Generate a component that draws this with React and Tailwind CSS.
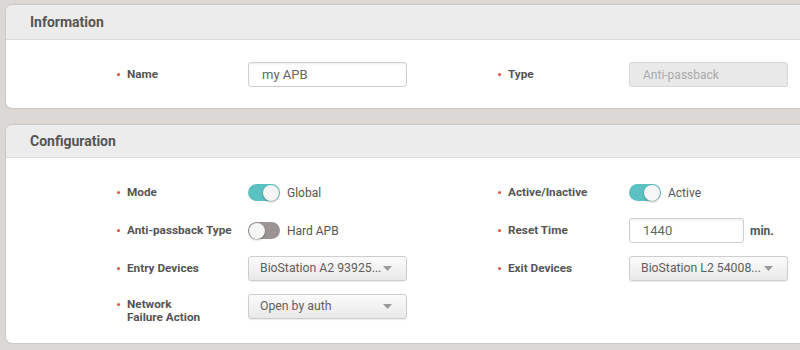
import React from "react";

function Label({ children, lines }) {
  return (
    <div className={`flex w-[131px] shrink-0 ${lines ? "items-start pt-[4px]" : "items-center"}`}>
      <span className={`w-[3px] h-[3px] rounded-full bg-[#e8513f] mr-[7px] shrink-0 ${lines ? "mt-[5px]" : ""}`} />
      <span className="text-[11.75px] leading-[12.5px] font-bold text-[#555]">{children}</span>
    </div>
  );
}

function Toggle({ on, text }) {
  return (
    <div className="flex items-center gap-[7px]">
      <div
        className={`w-[32px] h-[17px] rounded-full flex items-center px-[1px] ${
          on ? "bg-[#5cc1c3] justify-end" : "bg-[#9c9393] justify-start"
        }`}
      >
        <div className="w-[16px] h-[16px] rounded-full bg-[#f6f6f6] shadow-[0_1px_2px_rgba(0,0,0,0.35)]" />
      </div>
      <span className="text-[12px] text-[#555]">{text}</span>
    </div>
  );
}

function TextInput({ value, disabled, width = "w-[159px]" }) {
  return (
    <div
      className={`${width} h-[25px] shrink-0 rounded-[3px] border flex items-center pl-[13px] ${
        disabled
          ? "bg-[#e9e9e9] border-[#d6d6d6] text-[#aaa] text-[12px]"
          : "bg-white border-[#cfcfcf] text-[#666] text-[13px] shadow-[inset_0_1px_2px_rgba(0,0,0,0.08)]"
      }`}
    >
      {value}
    </div>
  );
}

function Select({ value }) {
  return (
    <div className="w-[159px] h-[25px] shrink-0 rounded-[3px] border border-[#cdcdcd] bg-gradient-to-b from-[#fbfbfb] to-[#e9e9e9] shadow-[0_1px_1px_rgba(0,0,0,0.08)] flex items-center justify-between pl-[11px] pr-[14px] text-[12.25px] text-[#5f5f5f] whitespace-nowrap">
      <span>{value}</span>
      <svg width="9" height="5" viewBox="0 0 9 5">
        <path d="M0 0 H9 L4.5 5 Z" fill="#9a9a9a" />
      </svg>
    </div>
  );
}

function Field({ label, lines, children }) {
  return (
    <div className={`flex ${lines ? "items-start" : "items-center"} pl-[111px]`}>
      <Label lines={lines}>{label}</Label>
      {children}
    </div>
  );
}

function Card({ title, children, headerH, className = "" }) {
  return (
    <div className={`w-[810px] bg-white rounded-[6px] shadow-[0_0_2px_rgba(0,0,0,0.25)] overflow-hidden ${className}`}>
      <div className={`${headerH} bg-[#ececec] border-b border-[#dadada] flex items-center pl-[24px]`}>
        <h2 className="text-[14px] font-bold text-[#555]">{title}</h2>
      </div>
      {children}
    </div>
  );
}

export default function App() {
  return (
    <div
      className="w-[800px] h-[350px] overflow-hidden bg-[#dcd8d5] pt-[5px] pl-[6px]"
      style={{ fontFamily: "Roboto, 'Liberation Sans', sans-serif" }}
    >
      <Card title="Information" headerH="h-[35px]">
        <div className="grid grid-cols-[381px_381px] pt-[22px] pb-[21px]">
          <Field label="Name">
            <TextInput value="my APB" />
          </Field>
          <Field label="Type">
            <TextInput value="Anti-passback" disabled />
          </Field>
        </div>
      </Card>

      <Card title="Configuration" headerH="h-[33px]" className="mt-[17px]">
        <div className="grid grid-cols-[381px_381px] pt-[22px] pb-[20px] gap-y-[13px]">
          <Field label="Mode">
            <div className="h-[25px] flex items-center">
              <Toggle on text="Global" />
            </div>
          </Field>
          <Field label="Active/Inactive">
            <div className="h-[25px] flex items-center">
              <Toggle on text="Active" />
            </div>
          </Field>

          <Field label="Anti-passback Type">
            <div className="h-[25px] flex items-center">
              <Toggle text="Hard APB" />
            </div>
          </Field>
          <Field label="Reset Time">
            <div className="flex items-center gap-[6px] shrink-0">
              <TextInput value="1440" width="w-[115px]" />
              <span className="text-[12px] font-bold text-[#555]">min.</span>
            </div>
          </Field>

          <Field label="Entry Devices">
            <Select value="BioStation A2 93925..." />
          </Field>
          <Field label="Exit Devices">
            <Select value="BioStation L2 54008..." />
          </Field>

          <Field label={<>Network<br />Failure Action</>} lines>
            <Select value="Open by auth" />
          </Field>
          <div />
        </div>
      </Card>
    </div>
  );
}
